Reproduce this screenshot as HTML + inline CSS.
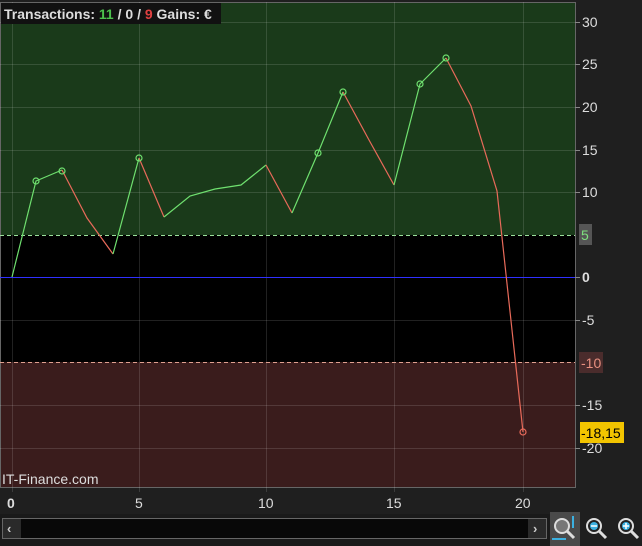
<!DOCTYPE html>
<html><head><style>
body{margin:0;width:642px;height:546px;background:#1e1e1e;overflow:hidden;font-family:"Liberation Sans",sans-serif;}
</style></head><body>
<svg width="642" height="546" style="position:absolute;left:0;top:0" font-family="Liberation Sans, sans-serif">
<rect x="0" y="0" width="642" height="546" fill="#1f1f1f"/>
<rect x="0" y="2" width="575" height="233" fill="#1a3a1a"/>
<rect x="0" y="235" width="575" height="127" fill="#000"/>
<rect x="0" y="362" width="575" height="125" fill="#3a1c1c"/>
<rect x="0.5" y="2.5" width="575" height="485" fill="none" stroke="#666" stroke-width="1"/>
<g stroke="#ffffff" stroke-opacity="0.13" stroke-width="1">
<line x1="0" y1="22.5" x2="575" y2="22.5"/><line x1="0" y1="64.5" x2="575" y2="64.5"/><line x1="0" y1="107.5" x2="575" y2="107.5"/><line x1="0" y1="150.5" x2="575" y2="150.5"/><line x1="0" y1="192.5" x2="575" y2="192.5"/><line x1="0" y1="320.5" x2="575" y2="320.5"/><line x1="0" y1="405.5" x2="575" y2="405.5"/><line x1="0" y1="448.5" x2="575" y2="448.5"/>
<line x1="12.5" y1="2" x2="12.5" y2="492"/><line x1="139.5" y1="2" x2="139.5" y2="492"/><line x1="266.5" y1="2" x2="266.5" y2="492"/><line x1="394.5" y1="2" x2="394.5" y2="492"/><line x1="523.5" y1="2" x2="523.5" y2="492"/>
</g>
<g stroke="#888" stroke-width="1">
<line x1="575" y1="22.5" x2="580" y2="22.5"/><line x1="575" y1="64.5" x2="580" y2="64.5"/><line x1="575" y1="107.5" x2="580" y2="107.5"/><line x1="575" y1="150.5" x2="580" y2="150.5"/><line x1="575" y1="192.5" x2="580" y2="192.5"/><line x1="575" y1="277.5" x2="580" y2="277.5"/><line x1="575" y1="320.5" x2="580" y2="320.5"/><line x1="575" y1="405.5" x2="580" y2="405.5"/><line x1="575" y1="448.5" x2="580" y2="448.5"/>
</g>
<line x1="0" y1="235.5" x2="575" y2="235.5" stroke="#9be09b" stroke-dasharray="4,3"/>
<line x1="0" y1="362.5" x2="575" y2="362.5" stroke="#e0a090" stroke-dasharray="4,3"/>
<line x1="0" y1="277.5" x2="575" y2="277.5" stroke="#3030ff" stroke-width="1"/>
<g fill="none" stroke-width="1.2">
<polyline stroke="#6fe06f" points="12,277 36,181 62,170"/>
<polyline stroke="#e86a5a" points="62,170 87,218 113,254"/>
<polyline stroke="#6fe06f" points="113,254 139,158"/>
<polyline stroke="#e86a5a" points="139,158 164,217"/>
<polyline stroke="#6fe06f" points="164,217 190,196 215,189 241,185 266,165"/>
<polyline stroke="#e86a5a" points="266,165 292,213"/>
<polyline stroke="#6fe06f" points="292,213 318,153 343,92"/>
<polyline stroke="#e86a5a" points="343,92 369,140 394,185"/>
<polyline stroke="#6fe06f" points="394,185 420,84 446,58"/>
<polyline stroke="#e86a5a" points="446,58 471,106 497,191 523,432"/>
</g>
<g fill="none" stroke-width="1.2" stroke="#6fe06f">
<circle cx="36" cy="181" r="3"/><circle cx="62" cy="171" r="3"/><circle cx="139" cy="158" r="3"/><circle cx="318" cy="153" r="3"/><circle cx="343" cy="92" r="3"/><circle cx="420" cy="84" r="3"/><circle cx="446" cy="58" r="3"/>
</g>
<circle cx="523" cy="432" r="3" fill="none" stroke="#e86a5a" stroke-width="1.2"/>
<g fill="#ddd" font-size="14">
<text x="582" y="27">30</text><text x="582" y="69">25</text><text x="582" y="112">20</text><text x="582" y="155">15</text><text x="582" y="197">10</text>
<text x="582" y="282" font-weight="bold">0</text><text x="582" y="325">-5</text><text x="582" y="410">-15</text><text x="582" y="453">-20</text>
</g>
<rect x="579" y="224" width="13" height="21" fill="#555"/>
<text x="581" y="240" fill="#7ee07e" font-size="14">5</text>
<rect x="579" y="352" width="24" height="21" fill="#4a2c2c"/>
<text x="581" y="368" fill="#e89080" font-size="14">-10</text>
<rect x="580" y="422" width="44" height="21" fill="#f2c400"/>
<text x="581" y="438" fill="#000" font-size="14">-18,15</text>
<text x="2" y="484" fill="#ddd" font-size="14">IT-Finance.com</text>
<g fill="#ddd" font-size="14">
<text x="7" y="508" font-weight="bold">0</text><text x="135" y="508">5</text><text x="258" y="508">10</text><text x="386" y="508">15</text><text x="515" y="508">20</text>
</g>
<rect x="0" y="514" width="550" height="32" fill="#1a1a1a"/>
<rect x="2.5" y="518.5" width="544" height="20" fill="#080808" stroke="#666"/>
<rect x="3" y="519" width="18" height="19" fill="#2a2a2a"/>
<text x="7" y="533" fill="#ccc" font-size="13" font-weight="bold">‹</text>
<rect x="528" y="519" width="18" height="19" fill="#2a2a2a"/>
<text x="533" y="533" fill="#ccc" font-size="13" font-weight="bold">›</text>
<rect x="550" y="512" width="30" height="34" fill="#4a4a4a"/>
<g>
<circle cx="562" cy="526" r="7" fill="#777" stroke="#ddd" stroke-width="2"/>
<line x1="567" y1="531" x2="574" y2="538" stroke="#ddd" stroke-width="3"/>
<line x1="573" y1="516" x2="573" y2="528" stroke="#3bb0e0" stroke-width="2"/>
<line x1="552" y1="539" x2="566" y2="539" stroke="#3bb0e0" stroke-width="2"/>
<circle cx="594" cy="526" r="7" fill="#222" stroke="#ddd" stroke-width="2"/>
<line x1="599" y1="531" x2="606" y2="538" stroke="#ddd" stroke-width="3"/>
<circle cx="594" cy="526" r="4" fill="#3bb0e0"/><line x1="591" y1="526" x2="597" y2="526" stroke="#fff" stroke-width="1.5"/>
<circle cx="626" cy="526" r="7" fill="#222" stroke="#ddd" stroke-width="2"/>
<line x1="631" y1="531" x2="638" y2="538" stroke="#ddd" stroke-width="3"/>
<circle cx="626" cy="526" r="4" fill="#3bb0e0"/><line x1="623" y1="526" x2="629" y2="526" stroke="#fff" stroke-width="1.5"/><line x1="626" y1="523" x2="626" y2="529" stroke="#fff" stroke-width="1.5"/>
</g>
<rect x="1" y="3" width="220" height="21" fill="#111"/>
<text x="4" y="19" font-size="14" font-weight="bold" fill="#ddd">Transactions: <tspan fill="#4cc04c">11</tspan> / 0 / <tspan fill="#e04040">9</tspan>  Gains: €</text>
</svg>
</body></html>
